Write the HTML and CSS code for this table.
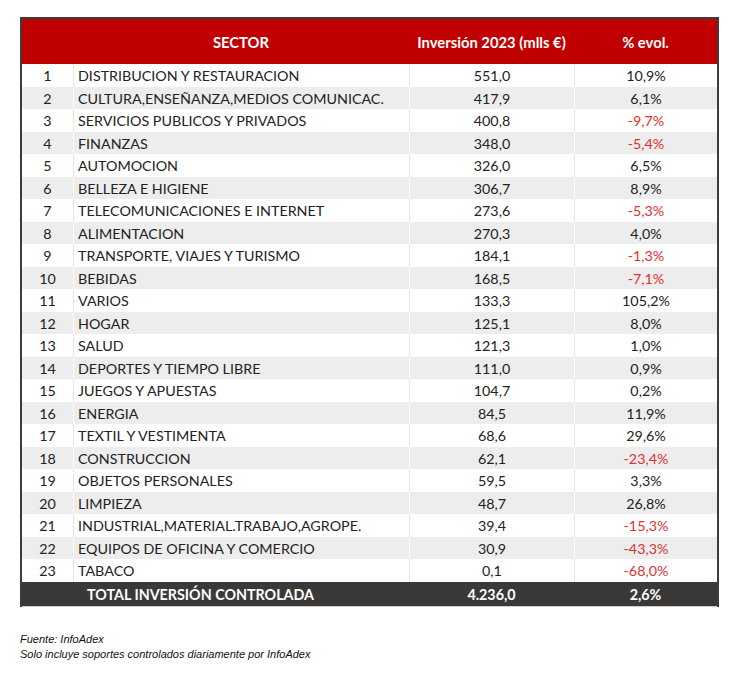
FILE: index.html
```html
<!DOCTYPE html>
<html lang="es">
<head>
<meta charset="utf-8">
<link rel="stylesheet" href="styles.css">
</head>
<body>
<table class="ranking">
  <colgroup>
    <col class="c-num"><col class="c-sector"><col class="c-val"><col class="c-pct">
  </colgroup>
  <thead>
    <tr><th></th><th>SECTOR</th><th>Inversión 2023 (mlls €)</th><th>% evol.</th></tr>
  </thead>
  <tbody>
    <tr><td>1</td><td>DISTRIBUCION Y RESTAURACION</td><td>551,0</td><td>10,9%</td></tr>
    <tr><td>2</td><td>CULTURA,ENSEÑANZA,MEDIOS COMUNICAC.</td><td>417,9</td><td>6,1%</td></tr>
    <tr><td>3</td><td>SERVICIOS PUBLICOS Y PRIVADOS</td><td>400,8</td><td class="neg">-9,7%</td></tr>
    <tr><td>4</td><td>FINANZAS</td><td>348,0</td><td class="neg">-5,4%</td></tr>
    <tr><td>5</td><td>AUTOMOCION</td><td>326,0</td><td>6,5%</td></tr>
    <tr><td>6</td><td>BELLEZA E HIGIENE</td><td>306,7</td><td>8,9%</td></tr>
    <tr><td>7</td><td>TELECOMUNICACIONES E INTERNET</td><td>273,6</td><td class="neg">-5,3%</td></tr>
    <tr><td>8</td><td>ALIMENTACION</td><td>270,3</td><td>4,0%</td></tr>
    <tr><td>9</td><td>TRANSPORTE, VIAJES Y TURISMO</td><td>184,1</td><td class="neg">-1,3%</td></tr>
    <tr><td>10</td><td>BEBIDAS</td><td>168,5</td><td class="neg">-7,1%</td></tr>
    <tr><td>11</td><td>VARIOS</td><td>133,3</td><td>105,2%</td></tr>
    <tr><td>12</td><td>HOGAR</td><td>125,1</td><td>8,0%</td></tr>
    <tr><td>13</td><td>SALUD</td><td>121,3</td><td>1,0%</td></tr>
    <tr><td>14</td><td>DEPORTES Y TIEMPO LIBRE</td><td>111,0</td><td>0,9%</td></tr>
    <tr><td>15</td><td>JUEGOS Y APUESTAS</td><td>104,7</td><td>0,2%</td></tr>
    <tr><td>16</td><td>ENERGIA</td><td>84,5</td><td>11,9%</td></tr>
    <tr><td>17</td><td>TEXTIL Y VESTIMENTA</td><td>68,6</td><td>29,6%</td></tr>
    <tr><td>18</td><td>CONSTRUCCION</td><td>62,1</td><td class="neg">-23,4%</td></tr>
    <tr><td>19</td><td>OBJETOS PERSONALES</td><td>59,5</td><td>3,3%</td></tr>
    <tr><td>20</td><td>LIMPIEZA</td><td>48,7</td><td>26,8%</td></tr>
    <tr><td>21</td><td>INDUSTRIAL,MATERIAL.TRABAJO,AGROPE.</td><td>39,4</td><td class="neg">-15,3%</td></tr>
    <tr><td>22</td><td>EQUIPOS DE OFICINA Y COMERCIO</td><td>30,9</td><td class="neg">-43,3%</td></tr>
    <tr><td>23</td><td>TABACO</td><td>0,1</td><td class="neg">-68,0%</td></tr>
  </tbody>
  <tfoot>
    <tr><td colspan="2" class="total-label">TOTAL INVERSIÓN CONTROLADA</td><td>4.236,0</td><td>2,6%</td></tr>
  </tfoot>
</table>
<div class="notes">
  <p>Fuente: InfoAdex</p>
  <p>Solo incluye soportes controlados diariamente por InfoAdex</p>
</div>
</body>
</html>
```

FILE: styles.css
```css
html, body {
  margin: 0;
  padding: 0;
  background: #ffffff;
}
body {
  padding: 17px 0 0 20px;
}
.ranking {
  border-collapse: separate;
  border-spacing: 0;
  border: 2px solid #3c3c3c;
  border-bottom: none;
  width: 699px;
  table-layout: fixed;
  font-family: Lato, "Liberation Sans", sans-serif;
  font-size: 14.3px;
  color: #222222;
}
.c-num { width: 51px; }
.c-sector { width: 336px; }
.c-val { width: 165px; }
.c-pct { width: 143px; }

.ranking thead th {
  background: #c00000;
  color: #ffffff;
  font-weight: bold;
  height: 45px;
  padding: 0;
  text-align: center;
  font-size: 14.8px;
}
.ranking tbody td {
  height: 22.52px;
  padding: 2px 0 0 0;
  box-sizing: border-box;
  text-align: center;
  border-left: 1px solid #e6e6e6;
  white-space: nowrap;
  line-height: 1;
}
.ranking tbody td:first-child {
  border-left: none;
}
.ranking tbody td:nth-child(2) {
  text-align: left;
  padding-left: 4px;
}
.ranking tbody tr:nth-child(even) td {
  background: #ededed;
  border-left-color: #ffffff;
}
.ranking tbody tr:nth-child(even) td:first-child {
  border-left: none;
}
.ranking td.neg {
  color: #e03131;
}
.ranking tfoot td {
  background: #3b3838;
  color: #ffffff;
  font-weight: bold;
  height: 23px;
  padding: 1px 0 0 0;
  text-align: center;
  border-bottom: 1px solid #cfcfcf;
}
.ranking tfoot td.total-label {
  padding-right: 30px;
}
.notes {
  margin-top: 25px;
  font-family: "Liberation Sans", Arial, sans-serif;
  font-style: italic;
  font-size: 11px;
  color: #111111;
}
.notes p {
  margin: 0;
  line-height: 15px;
}
```
